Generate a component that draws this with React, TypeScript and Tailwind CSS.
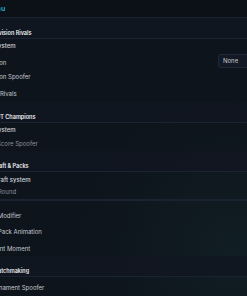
import React from "react";

const font = { fontFamily: "Inter, 'Noto Sans', sans-serif" };

function SectionHeader({ title }: { title: string }) {
  return (
    <div className="h-[21px] border-b border-[#1b2230] bg-[#111722]/80 pl-[23px] pt-[11px]">
      <p className="text-[5.5px] leading-[8px] font-semibold text-[#eceef2]">{title}</p>
    </div>
  );
}

function SubLabel({ label, className = "h-[14px] pl-[9px]" }: { label: string; className?: string }) {
  return (
    <div className={`flex items-center ${className}`}>
      <p className="text-[6px] leading-[8px] font-medium text-[#d3d7de]">{label}</p>
    </div>
  );
}

function Item({
  label,
  dim = false,
  className = "h-[16px] pl-[14px]",
  children,
}: {
  label: string;
  dim?: boolean;
  className?: string;
  children?: React.ReactNode;
}) {
  return (
    <div className={`flex items-center justify-between ${className}`}>
      <p className={`text-[6px] leading-[8px] ${dim ? "text-[#8b919c]" : "text-[#c3c8d0]"}`}>{label}</p>
      {children}
    </div>
  );
}

export default function App() {
  return (
    <div
      className="relative h-[296px] w-[247px] overflow-hidden bg-[#0e141c] bg-[radial-gradient(circle_at_95%_85%,rgba(24,64,58,0.22),transparent_45%)]"
      style={font}
    >
      <div className="-ml-[30px] w-[290px]">
        <div className="flex h-[18px] items-center border-b border-[#1b2230] bg-[#0c1017] pl-[16px]">
          <p className="text-[7px] leading-[8px] font-semibold text-[#26b3df]">Menu</p>
        </div>

        <SectionHeader title="Division Rivals" />
        <SubLabel label="Rank system" />
        <Item label="Division" className="h-[16px] pl-[14px] pt-[3px]">
          <div className="mr-[2px] flex h-[14px] w-[40px] -translate-y-[2px] items-center rounded-[3px] border border-[#222a3a] bg-[#131925] pl-[4px]">
            <span className="text-[6px] leading-[8px] text-[#c9cdd4]">None</span>
          </div>
        </Item>
        <Item label="Division Spoofer" />
        <Item label="Skip Rivals" className="h-[17px] pl-[16px]" />

        <SectionHeader title="FUT Champions" />
        <SubLabel label="Rank system" />
        <Item label="Score Spoofer" dim className="h-[14px] pl-[27px]" />

        <SectionHeader title="Draft & Packs" />
        <SubLabel label="Draft system" className="h-[15px] pl-[24px] pt-[1px]" />
        <div className="h-[21px] pl-[14px] pt-[1px]">
          <p className="text-[6px] leading-[8px] text-[#8b919c]">Skip Round</p>
          <div className="mt-[3px] h-[2px] w-full bg-[#1b2331]" />
        </div>
        <Item label="Odds Modifier" className="h-[16px] pl-[11px]" />
        <Item label="Skip Pack Animation" />
        <Item label="Instant Moment" className="h-[16px] pl-[16px] pt-[2px]" />

        <SectionHeader title="Matchmaking" />
        <Item label="Tournament Spoofer" className="h-[20px] pl-[16px] pt-[2px]" />
      </div>
    </div>
  );
}
